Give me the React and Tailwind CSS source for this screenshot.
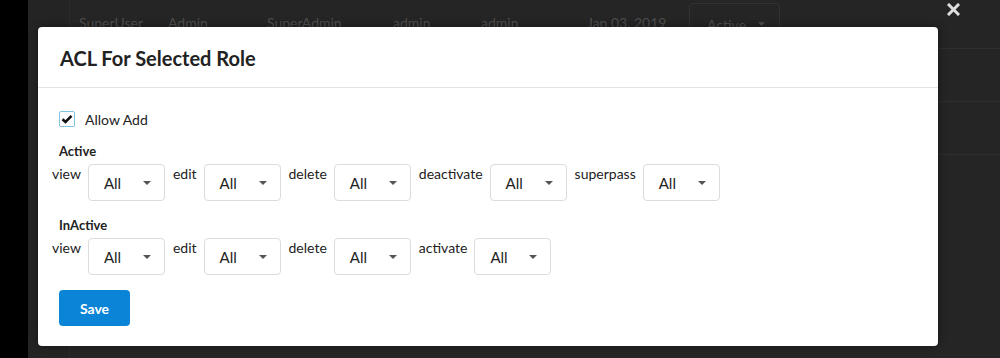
import React from 'react';

const Caret = () => (
  <svg width="8" height="4" viewBox="0 0 8 4" className="shrink-0">
    <path d="M0 0h8L4 4z" fill="#555" />
  </svg>
);

const SelectBox = ({ value = 'All' }) => (
  <div className="w-[77px] h-[37px] border border-[#dcdcdc] rounded-[4px] bg-white flex items-center justify-between pl-[15px] pr-[13px] text-[15px] text-[#222]">
    <span className="pt-[1px]">{value}</span>
    <Caret />
  </div>
);

const PermRow = ({ items }) => (
  <div className="flex items-start -ml-[7px]">
    {items.map((label) => (
      <div key={label} className="flex items-start">
        <span className="text-[14px] leading-[16px] pt-[2px] text-[#222] mr-[7px]">{label}</span>
        <div className="mr-[8px]">
          <SelectBox />
        </div>
      </div>
    ))}
  </div>
);

const App = () => {
  return (
    <div className="relative w-[1000px] h-[358px] overflow-hidden bg-black font-['Lato','Liberation_Sans',sans-serif]">
      {/* dimmed page behind the modal */}
      <div className="flex h-full">
        <div className="w-[28px] bg-black" />
        <div className="w-[42px] bg-[#242424] border-r border-[#2c2c2c]" />
        <div className="flex-1 bg-[#252525]">
          <div className="h-[49px] flex items-start text-[14px] text-[#4e4e4e] whitespace-nowrap border-b border-[#2e2e2e]">
            <span className="w-[98px] shrink-0 pl-[9px] pt-[12px]">SuperUser</span>
            <span className="w-[99px] shrink-0 pt-[12px]">Admin</span>
            <span className="w-[126px] shrink-0 pt-[12px]">SuperAdmin</span>
            <span className="w-[88px] shrink-0 pt-[12px]">admin</span>
            <span className="w-[106px] shrink-0 pt-[12px]">admin</span>
            <span className="w-[102px] shrink-0 pt-[12px]">Jan 03, 2019</span>
            <div className="mt-[3px] w-[91px] shrink-0 h-[40px] border border-[#323232] rounded-[4px] flex items-start pt-[10px] pl-[17px] gap-[12px]">
              <span>Active</span>
              <svg width="7" height="4" viewBox="0 0 8 4" className="mt-[8px]">
                <path d="M0 0h8L4 4z" fill="#4e4e4e" />
              </svg>
            </div>
          </div>
          <div className="h-[53px] border-b border-[#2e2e2e]" />
          <div className="h-[53px] border-b border-[#2e2e2e]" />
        </div>
      </div>

      {/* close button */}
      <svg className="absolute left-[947px] top-[3px]" width="13" height="13" viewBox="0 0 13 13">
        <path d="M2 2L11 11M11 2L2 11" stroke="#dedede" strokeWidth="3" strokeLinecap="square" />
      </svg>

      {/* modal */}
      <div className="absolute left-[38px] top-[27px] w-[900px] h-[319px] bg-white rounded-[4px] shadow-[0_0_8px_rgba(0,0,0,0.4)]">
        <div className="h-[61px] border-b border-[#e3e3e3] flex items-center pl-[22px]">
          <h2 className="text-[20px] font-bold text-[#222] leading-none pt-[2px]">ACL For Selected Role</h2>
        </div>
        <div className="pt-[23px] px-[21px]">
          <label className="flex items-center h-[16px]">
            <span className="w-[16px] h-[16px] border border-[#7fc4e0] rounded-[2px] flex items-center justify-center bg-white">
              <svg width="12" height="10" viewBox="0 0 12 10">
                <path d="M1.5 5.2L4.5 8L10.5 1.8" stroke="#111" strokeWidth="2.6" fill="none" />
              </svg>
            </span>
            <span className="ml-[10px] text-[14px] text-[#222]">Allow Add</span>
          </label>

          <div className="mt-[16px] text-[13px] leading-[16px] font-bold text-[#222]">Active</div>
          <div className="mt-[5px]">
            <PermRow items={['view', 'edit', 'delete', 'deactivate', 'superpass']} />
          </div>

          <div className="mt-[16px] text-[13px] leading-[16px] font-bold text-[#222]">InActive</div>
          <div className="mt-[5px]">
            <PermRow items={['view', 'edit', 'delete', 'activate']} />
          </div>

          <button className="mt-[15px] w-[71px] h-[36px] bg-[#0a84d6] rounded-[4px] text-white text-[14px] font-bold">
            Save
          </button>
        </div>
      </div>
    </div>
  );
};

export default App;
